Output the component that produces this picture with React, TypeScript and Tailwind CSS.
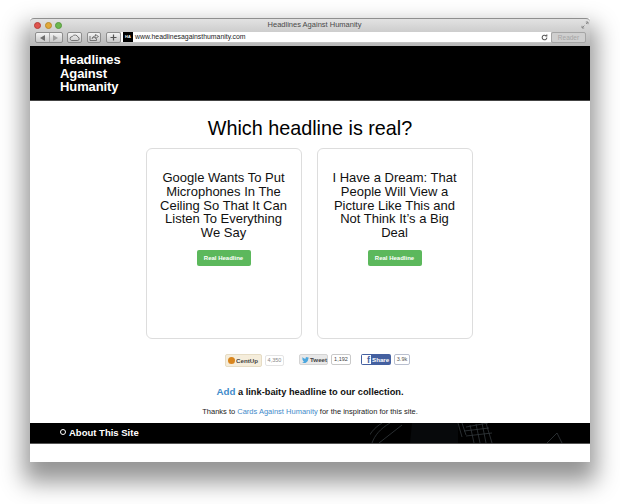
import { Fragment } from "react";

const sans = "font-['Liberation_Sans',Arial,sans-serif]";
const btn = "h-[11px] rounded-[2px] border border-[#8d8d8d] bg-gradient-to-b from-[#f4f4f4] to-[#c9c9c9] flex items-center justify-center shrink-0";

function Toolbar() {
  return (
    <div className="rounded-t-[4px] border-t border-t-[#8f8f8f] bg-gradient-to-b from-[#e2e2e2] to-[#b7b7b7] h-[28px] shrink-0">
      <div className="h-[12px] flex items-center pl-[4px] gap-[3.5px]">
        <span className="w-[7px] h-[7px] rounded-full bg-[#e0544e] border border-[#b5403a]" />
        <span className="w-[7px] h-[7px] rounded-full bg-[#e2a93a] border border-[#b88a2e]" />
        <span className="w-[7px] h-[7px] rounded-full bg-[#6cb84e] border border-[#57983f]" />
        <span className="flex-1 text-center text-[7.5px] text-[#4a4a4a] pr-[14px]">Headlines Against Humanity</span>
        <svg width="8" height="8" viewBox="0 0 8 8" className="mr-[1px]">
          <path d="M1 7 L3.4 4.6 M5 3 L7 1 M4.8 1 H7 V3.2 M1 4.8 V7 H3.2" stroke="#8a8a8a" strokeWidth="1" fill="none" />
        </svg>
      </div>
      <div className="flex items-start pt-[1px] pl-[5px] pr-[4px] h-[14px]">
        <div className={`${btn} w-[28px]`}>
          <span className="flex-1 flex justify-center">
            <svg width="5" height="6" viewBox="0 0 5 6"><path d="M5 0V6L0 3Z" fill="#6e6e6e" /></svg>
          </span>
          <span className="w-px h-full bg-[#a8a8a8]" />
          <span className="flex-1 flex justify-center">
            <svg width="5" height="6" viewBox="0 0 5 6"><path d="M0 0V6L5 3Z" fill="#a0a0a0" /></svg>
          </span>
        </div>
        <div className={`${btn} w-[15px] ml-[4px]`}>
          <svg width="11" height="7" viewBox="0 0 11 7">
            <path d="M2.500 6.500H8.800A1.700 1.700 0 0 0 9 3.200 3.200 3.200 0 0 0 3.200 2.600 2 2 0 0 0 2.500 6.500Z" fill="none" stroke="#5e5e5e" strokeWidth="0.8" />
          </svg>
        </div>
        <div className={`${btn} w-[14px] ml-[5px]`}>
          <svg width="10" height="7" viewBox="0 0 10 7">
            <path d="M1 2V6.500H7.500V4.500M3 4.500C3.500 2.800 5 2 6.500 2V0.500L9.500 2.500 6.500 4.500V3.200C5 3.200 4 3.600 3 4.500Z" fill="none" stroke="#5e5e5e" strokeWidth="0.8" />
          </svg>
        </div>
        <div className={`${btn} w-[15px] ml-[5px]`}>
          <svg width="7" height="7" viewBox="0 0 7 7"><path d="M3.500 0.500V6.500M0.500 3.500H6.500" stroke="#555" strokeWidth="1.2" /></svg>
        </div>
        <div className="flex-1 h-[11px] pl-[2px] flex items-center bg-white border-b border-b-[#c4c4c4]">
          <div className="w-[10px] h-[10px] bg-black flex items-center justify-center text-[4px] leading-none text-white font-bold shrink-0">HA</div>
          <span className="ml-[2px] text-[6.9px] text-[#222] flex-1">www.headlinesagainsthumanity.com</span>
          <svg width="7" height="7" viewBox="0 0 24 24" className="mr-[3px]">
            <path d="M20 12a8 8 0 1 1-3-6.200M20 2v5h-5" fill="none" stroke="#555" strokeWidth="3.500" />
          </svg>
        </div>
        <div className="w-[35px] h-[11px] rounded-[2px] border border-[#a5a5a5] bg-[#cfcfcf] text-[6.5px] leading-[9px] text-center text-[#a5a5a5] shrink-0">Reader</div>
      </div>
    </div>
  );
}

function HeadlineCard({ title }: { title: string }) {
  return (
    <div className="w-[156px] h-[191px] rounded-[6px] border border-[#dddddd] px-[12px] pt-[22px] flex flex-col items-center">
      <h2 className="text-[13px] leading-[13.75px] text-center text-[#111] h-[69px]">{title}</h2>
      <button className="mt-[10px] w-[54px] h-[16px] rounded-[2px] bg-[#5cb85c] text-white text-[6px] font-bold leading-[16px] text-center">
        Real Headline
      </button>
    </div>
  );
}

function ShareCount({ n, w, cls }: { n: string; w: string; cls: string }) {
  return (
    <span className={`${w} ${cls} ml-[3px] h-[11px] border rounded-[2px] bg-white text-[5.5px] leading-[9px] text-center`}>{n}</span>
  );
}

function ShareButtons() {
  return (
    <div className="flex items-start justify-center mt-[15px] h-[14px] pl-[15px]">
      <div className="flex items-center">
        <span className="w-[37px] h-[13px] rounded-[2px] bg-[#f5eddb] border border-[#e6dcc4] flex items-center pl-[2px] gap-[1px] text-[6.2px] font-bold text-[#444]">
          <span className="w-[7px] h-[7px] rounded-full bg-[#d9861e] shrink-0" />
          CentUp
        </span>
        <ShareCount n="4,350" w="w-[19px]" cls="border-[#e4e4e4] text-[#888]" />
      </div>
      <div className="flex items-center ml-[15px]">
        <span className="w-[29px] h-[11px] rounded-[2px] bg-[#e8e8e8] border border-[#d4d4d4] flex items-center pl-[2px] gap-[1px] text-[6.2px] font-bold text-[#444]">
          <svg width="7" height="6" viewBox="0 0 24 20" className="shrink-0">
            <path d="M24 2.400c-.9.4-1.800.7-2.800.8 1-.6 1.800-1.600 2.200-2.700-1 .6-2 1-3.100 1.200a4.900 4.900 0 0 0-8.400 4.500C7.700 5.500 4.100 3.500 1.700.5a4.900 4.900 0 0 0 1.500 6.600c-.8 0-1.600-.2-2.200-.6 0 2.400 1.700 4.400 3.900 4.900-.7.2-1.500.2-2.200.1.600 2 2.400 3.400 4.600 3.400A9.900 9.900 0 0 1 0 17.900 13.900 13.900 0 0 0 21.500 5.500c1-.7 1.800-1.600 2.500-3.100Z" fill="#4da7de" />
          </svg>
          Tweet
        </span>
        <ShareCount n="1,192" w="w-[20px]" cls="border-[#c9c9c9] text-[#444]" />
      </div>
      <div className="flex items-center ml-[10px]">
        <span className="w-[30px] h-[11px] rounded-[2px] bg-[#4460a0] flex items-center pl-[1px] gap-[1px] text-[6.2px] font-bold text-white">
          <span className="w-[9px] h-[9px] bg-white text-[#4460a0] text-[9px] font-bold leading-[10px] text-right pr-[1px] overflow-hidden shrink-0">f</span>
          Share
        </span>
        <ShareCount n="3.9k" w="w-[16px]" cls="border-[#b9bfcf] text-[#555]" />
      </div>
    </div>
  );
}

export default function App() {
  return (
    <div className={`${sans} w-[620px] h-[504px] bg-white overflow-hidden pt-[18px] px-[30px]`}>
      <div className="w-[560px] h-[444px] flex flex-col bg-white shadow-[0_14px_22px_6px_rgba(0,0,0,0.42)]">
        <Toolbar />
        <header className="h-[55px] bg-black border-b border-b-[#444] pl-[30px] pt-[7px] shrink-0">
          <div className="text-white font-bold text-[13px] leading-[13.7px] tracking-[-0.1px]">
            {["Headlines", "Against", "Humanity"].map((t) => (
              <Fragment key={t}>
                {t}
                <br />
              </Fragment>
            ))}
          </div>
        </header>
        <main className="flex-1 flex flex-col items-center">
          <h1 className="mt-[15px] text-[19.8px] leading-[24px] text-black">Which headline is real?</h1>
          <div className="flex gap-[15px] mt-[8px] pr-[2px]">
            <HeadlineCard title="Google Wants To Put Microphones In The Ceiling So That It Can Listen To Everything We Say" />
            <HeadlineCard title="I Have a Dream: That People Will View a Picture Like This and Not Think It’s a Big Deal" />
          </div>
          <ShareButtons />
          <p className="mt-[17px] text-[9.25px] leading-[14px] font-bold text-[#111]">
            <span className="text-[#428bca] text-[9.75px]">Add</span> a link-baity headline to our collection.
          </p>
          <p className="mt-[8px] text-[7.5px] leading-[10px] text-[#222]">
            Thanks to <span className="text-[#428bca]">Cards Against Humanity</span> for the inspiration for this site.
          </p>
        </main>
        <footer className="relative overflow-hidden h-[21px] bg-black border-b border-b-[#555] mb-[18px] pl-[30px] flex items-center gap-[3px] shrink-0">
          <span className="w-[6px] h-[6px] rounded-full border-[1.5px] border-white -mt-[2px]" />
          <span className="text-white text-[9.5px] font-bold">About This Site</span>
          <svg className="absolute left-[340px] top-0" width="220" height="20" viewBox="0 0 220 20" fill="none" stroke="#3a4045" strokeWidth="0.7">
            <path d="M-4 20C-1 11 4 5 12 0M2 20C5 12 10 6 20 0M9 20L32 2" />
            <path d="M42 0H88V20H40Z" fill="#07090b" stroke="none" />
            <path d="M88 0L92 14M92 0L96 12M96 4L118 0M94 8L119 5M96 13L122 10M100 2L104 20M106 1L110 20M112 0L116 20M116 0L122 20" />
            <path d="M177 20L187 10L192 20" />
          </svg>
        </footer>
      </div>
    </div>
  );
}
